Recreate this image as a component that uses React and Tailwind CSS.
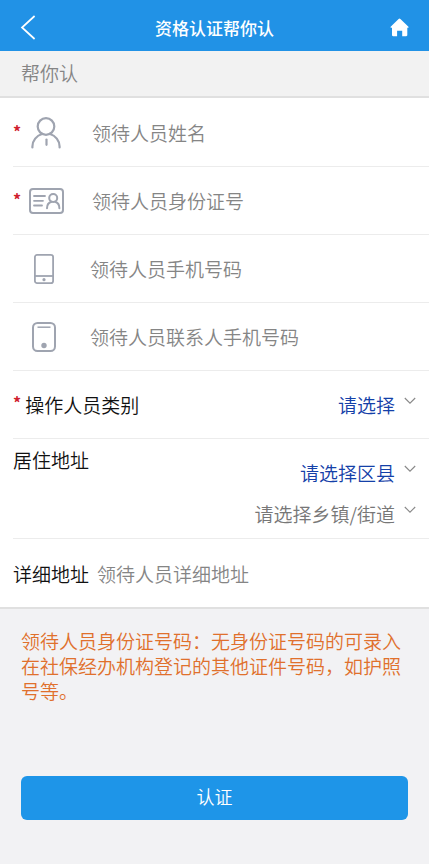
import React, { useState } from "react";

const PersonIcon = () => (
  <svg width="30" height="32" viewBox="0 0 30 32" fill="none" stroke="#9fa4b0" strokeWidth="2.2" strokeLinecap="round">
    <circle cx="15" cy="9.5" r="8.3" />
    <path d="M1.4 30.500v-1C1.4 23.5 5.600 18.6 11 17M28.6 30.500v-1C28.6 23.5 24.4 18.6 19 17" />
    <path d="M15.500 22.500v5.300" />
  </svg>
);

const IdCardIcon = () => (
  <svg width="35" height="26" viewBox="0 0 35 26" fill="none" stroke="#9fa4b0" strokeWidth="2" strokeLinecap="round">
    <rect x="1" y="1" width="33" height="24" rx="3" />
    <path d="M5 8h11M5 12.800h9M5 17.500h8" strokeWidth="1.8" />
    <circle cx="24.200" cy="10" r="4" />
    <path d="M18 20.200c0-3.400 2-5.800 4.600-6.500M30.400 20.200c0-3.400-1.800-5.800-4.400-6.500" />
  </svg>
);

const PhoneIcon = () => (
  <svg width="20" height="30" viewBox="0 0 20 30" fill="none" stroke="#9fa4b0" strokeWidth="1.8">
    <rect x="0.9" y="0.9" width="18.2" height="28.2" rx="2.2" />
    <path d="M1 22h18" />
    <circle cx="10" cy="25.7" r="1.6" fill="#9fa4b0" stroke="none" />
  </svg>
);

const ContactPhoneIcon = () => (
  <svg width="24" height="30" viewBox="0 0 24 30" fill="none" stroke="#9fa4b0" strokeWidth="2">
    <rect x="1" y="1" width="22" height="28" rx="4.5" />
    <path d="M5.5 5.2h13" strokeWidth="1.5" />
    <circle cx="12" cy="23.5" r="2.700" fill="#9fa4b0" stroke="none" />
  </svg>
);

const fields = [
  { name: "name", label: "领待人员姓名", icon: PersonIcon, required: true },
  { name: "idNumber", label: "领待人员身份证号", icon: IdCardIcon, required: true },
  { name: "phone", label: "领待人员手机号码", icon: PhoneIcon },
  { name: "contactPhone", label: "领待人员联系人手机号码", icon: ContactPhoneIcon },
];

const Star = () => <span className="block pb-1 text-base leading-5 font-bold text-[#d0202e]">*</span>;

const Field = ({ field, value, onChange }) => {
  const Icon = field.icon;
  return (
    <div className="ml-[13px] flex h-[68px] items-center border-b border-[#ececec]">
      <span className={field.required ? "w-[15px] shrink-0" : "w-[13px] shrink-0"}>
        {field.required && <Star />}
      </span>
      <label htmlFor={field.name} aria-label={field.label} className="flex w-9 shrink-0 justify-center">
        <Icon />
      </label>
      <input
        id={field.name}
        type="text"
        required={field.required}
        placeholder={field.label}
        value={value}
        onChange={onChange}
        className="ml-7 min-w-0 flex-1 text-[#222] outline-none placeholder:text-[#858585]"
      />
    </div>
  );
};

const Picker = ({ id, label, placeholder, options, className }) => (
  <div className="relative min-w-0 flex-1">
    <select
      id={id}
      aria-label={label}
      defaultValue=""
      className={`h-[41px] w-full appearance-none pr-[34px] outline-none [text-align-last:right] ${className}`}
    >
      <option value="">{placeholder}</option>
      {options.map((o) => (
        <option key={o}>{o}</option>
      ))}
    </select>
    <svg
      width="12"
      height="8"
      viewBox="0 0 12 8"
      fill="none"
      stroke="#888"
      strokeWidth="1.1"
      className="pointer-events-none absolute top-[13px] right-[13px]"
    >
      <path d="M0.8 1l5.2 5.2L11.2 1" />
    </svg>
  </div>
);

const App = () => {
  const [form, setForm] = useState({
    name: "",
    idNumber: "",
    phone: "",
    contactPhone: "",
    address: "",
  });

  const handleChange = (key) => (e) => setForm({ ...form, [key]: e.target.value });

  return (
    <div className="min-h-screen bg-[#f2f2f4] font-['Noto_Sans_CJK_SC',sans-serif] text-[19px] leading-[25px] font-[350]">
      <header className="flex h-[51px] items-center justify-between bg-[#2192e6] px-5 pt-1 text-white">
        <button type="button" aria-label="返回" className="w-5">
          <svg width="16" height="25" viewBox="0 0 16 25" fill="none" stroke="currentColor" strokeWidth="1.7">
            <path d="M14.6 1L2 12.5L14.6 24" />
          </svg>
        </button>
        <h1 className="text-[17px] font-medium">资格认证帮你认</h1>
        <a href="#home" aria-label="首页" className="flex w-5 justify-end">
          <svg width="19" height="19" viewBox="0 0 19 19" fill="currentColor">
            <path d="M8.6 0.9a1.3 1.3 0 0 1 1.8 0l7.8 7.6c.7.7.4 1.3-.5 1.3h-.4v7.3c0 .7-.4 1.1-1.1 1.1h-4v-5.4H7.1v5.4h-4c-.7 0-1.1-.4-1.1-1.1V9.8h-.6c-.9 0-1.2-.6-.5-1.3z" />
          </svg>
        </a>
      </header>

      <h2 className="h-[47px] border-b-2 border-[#e0e0e0] bg-[#f2f2f2] px-[21px] pt-[9px] text-[#858585]">帮你认</h2>

      <form onSubmit={(e) => e.preventDefault()}>
        <div className="border-b-2 border-[#e0e0e0] bg-white pt-px">
          {fields.map((field) => (
            <Field key={field.name} field={field} value={form[field.name]} onChange={handleChange(field.name)} />
          ))}

          <div className="ml-[13px] flex h-[68px] items-center border-b border-[#ececec]">
            <label htmlFor="operatorType" className="flex shrink-0 gap-1">
              <Star />
              <span className="text-[#111]">操作人员类别</span>
            </label>
            <Picker
              id="operatorType"
              placeholder="请选择"
              options={["本人", "亲属", "社区工作人员"]}
              className="text-[#1440a8]"
            />
          </div>

          <div className="ml-[13px] flex border-b border-[#ececec] pb-1">
            <label htmlFor="district" className="shrink-0 pt-2 text-[#111]">
              居住地址
            </label>
            <div className="flex min-w-0 flex-1 flex-col pt-[13px]">
              <Picker
                id="district"
                label="区县"
                placeholder="请选择区县"
                options={["东城区", "西城区"]}
                className="text-[#1440a8]"
              />
              <Picker
                id="street"
                label="乡镇/街道"
                placeholder="请选择乡镇/街道"
                options={["东街街道", "西街街道"]}
                className="text-[#777]"
              />
            </div>
          </div>

          <div className="ml-[13px] flex h-[68px] items-center">
            <label htmlFor="address" className="shrink-0 text-[#111]">
              详细地址
            </label>
            <input
              id="address"
              type="text"
              placeholder="领待人员详细地址"
              value={form.address}
              onChange={handleChange("address")}
              className="ml-2 min-w-0 flex-1 text-[#222] outline-none placeholder:text-[#858585]"
            />
          </div>
        </div>

        <div className="px-[21px] pt-[19px]">
          <p className="text-[#e0702c]">
            领待人员身份证号码：无身份证号码的可录入在社保经办机构登记的其他证件号码，如护照号等。
          </p>
          <button type="submit" className="mt-[73px] h-11 w-full rounded-md bg-[#1e95e8] pb-1 text-lg text-white">
            认证
          </button>
        </div>
      </form>
    </div>
  );
};

export default App;
